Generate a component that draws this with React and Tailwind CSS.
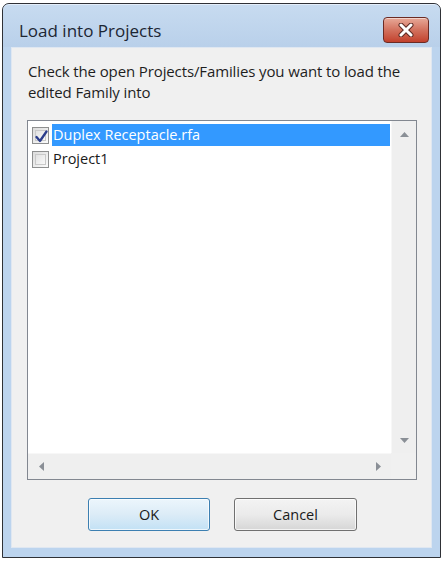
import React, { useState } from "react";

const font = { fontFamily: '"Open Sans", "Noto Sans", sans-serif' };

const Arrow = ({ dir }) => {
  const paths = {
    up: "M0 5 L4.5 0 L9 5 Z",
    down: "M0 0 L9 0 L4.5 5 Z",
    left: "M5 0 L5 9 L0 4.5 Z",
    right: "M0 0 L5 4.5 L0 9 Z",
  };
  const vertical = dir === "up" || dir === "down";
  return (
    <svg
      width={vertical ? 9 : 5}
      height={vertical ? 5 : 9}
      viewBox={vertical ? "0 0 9 5" : "0 0 5 9"}
    >
      <path d={paths[dir]} fill="#8a8f96" />
    </svg>
  );
};

const CheckBox = ({ checked }) => (
  <div className="relative w-[17px] h-[17px] border border-[#8e8f8f] bg-gradient-to-br from-[#dcdcdc] to-[#fbfbfb] p-[2px] shrink-0">
    <div className="w-full h-full border border-[#c9c9c9] bg-gradient-to-br from-[#e2e2e2] to-[#f9f9f9]" />
    {checked && (
      <svg
        className="absolute left-[2px] top-[2px]"
        width="13"
        height="13"
        viewBox="0 0 13 13"
      >
        <path
          d="M1.5 7 L5 11 L11.5 1.5"
          fill="none"
          stroke="#2b3d8c"
          strokeWidth="2.3"
          strokeLinecap="round"
          strokeLinejoin="round"
        />
      </svg>
    )}
  </div>
);

const App = () => {
  const [items, setItems] = useState([
    { id: 1, name: "Duplex Receptacle.rfa", checked: true },
    { id: 2, name: "Project1", checked: false },
  ]);
  const [selected, setSelected] = useState(1);

  const toggle = (id) =>
    setItems(items.map((it) => (it.id === id ? { ...it, checked: !it.checked } : it)));

  return (
    <div className="w-[444px] h-[561px] bg-white pt-[3px] pl-[2px] pr-[3px] pb-[3px]" style={font}>
      <div className="w-full h-full border border-[#2f3136] rounded-t-[7px] bg-[#bcd4ee] flex flex-col overflow-hidden">
        {/* Title bar */}
        <div className="h-[43px] shrink-0 flex items-start justify-between bg-gradient-to-b from-[#c7dbf0] to-[#b9d0ea] border-t border-[#e4eefa] rounded-t-[6px]">
          <div className="pl-[16px] pt-[15px] text-[17px] leading-[22px] text-[#1c2633]">
            Load into Projects
          </div>
          <button className="mt-[12px] mr-[11px] w-[46px] h-[26px] rounded-[4px] border border-[#6b2b24] bg-gradient-to-b from-[#e7a999] via-[#d2715e] to-[#c2402c] flex items-center justify-center shadow-[inset_0_1px_0_rgba(255,255,255,0.5)]">
            <svg width="16" height="14" viewBox="0 0 16 14">
              <path
                d="M3 2 L13 12 M13 2 L3 12"
                stroke="#5c2a24"
                strokeWidth="5"
                strokeLinecap="round"
              />
              <path
                d="M3 2 L13 12 M13 2 L3 12"
                stroke="#ffffff"
                strokeWidth="3"
                strokeLinecap="round"
              />
            </svg>
          </button>
        </div>

        {/* Content */}
        <div className="flex-1 mx-[8px] mb-[9px] bg-[#f0f0f0] border border-[#dfe7f1] flex flex-col pl-[15px] pr-[14px] pt-[13px] pb-[16px]">
          <p className="pl-[1px] text-[15px] leading-[21px] text-[#1e1e1e] tracking-[-0.12px]">
            Check the open Projects/Families you want to load the edited Family into
          </p>

          {/* List box */}
          <div className="mt-[17px] h-[360px] border border-[#828790] bg-white grid grid-cols-[1fr_25px] grid-rows-[1fr_26px]">
            <div className="pt-[2px] pl-[4px] overflow-hidden">
              {items.map((it) => (
                <div
                  key={it.id}
                  className="h-[24px] flex items-center"
                  onClick={() => setSelected(it.id)}
                >
                  <div onClick={() => toggle(it.id)}>
                    <CheckBox checked={it.checked} />
                  </div>
                  <div
                    className={`ml-[3px] mr-[1px] flex-1 h-[22px] pl-[1px] text-[14.5px] leading-[22px] ${
                      selected === it.id ? "bg-[#3399ff] text-white" : "text-[#1a1a1a]"
                    }`}
                  >
                    {it.name}
                  </div>
                </div>
              ))}
            </div>

            {/* Vertical scrollbar */}
            <div className="bg-[#efefef] border-l border-[#f7f7f7] flex flex-col justify-between">
              <div className="h-[26px] flex items-center justify-center">
                <Arrow dir="up" />
              </div>
              <div className="h-[26px] flex items-center justify-center">
                <Arrow dir="down" />
              </div>
            </div>

            {/* Horizontal scrollbar */}
            <div className="bg-[#efefef] border-t border-[#f7f7f7] flex items-center justify-between">
              <div className="w-[26px] h-full flex items-center justify-center">
                <Arrow dir="left" />
              </div>
              <div className="w-[26px] h-full flex items-center justify-center">
                <Arrow dir="right" />
              </div>
            </div>
            <div className="bg-[#f0f0f0]" />
          </div>

          {/* Buttons */}
          <div className="mt-auto flex justify-center gap-[24px] pl-[1px]">
            <button className="w-[122px] h-[33px] rounded-[3px] border border-[#3c7fb1] bg-gradient-to-b from-[#ecf6fc] via-[#dcecf7] to-[#c2e1f5] shadow-[inset_0_0_0_1px_rgba(255,255,255,0.7)] text-[14.5px] text-[#1a1a1a]">
              OK
            </button>
            <button className="w-[123px] h-[33px] rounded-[3px] border border-[#707070] bg-gradient-to-b from-[#f3f3f3] via-[#ebebeb] to-[#d6d6d6] shadow-[inset_0_0_0_1px_rgba(255,255,255,0.7)] text-[14.5px] text-[#1a1a1a]">
              Cancel
            </button>
          </div>
        </div>
      </div>
    </div>
  );
};

export default App;
